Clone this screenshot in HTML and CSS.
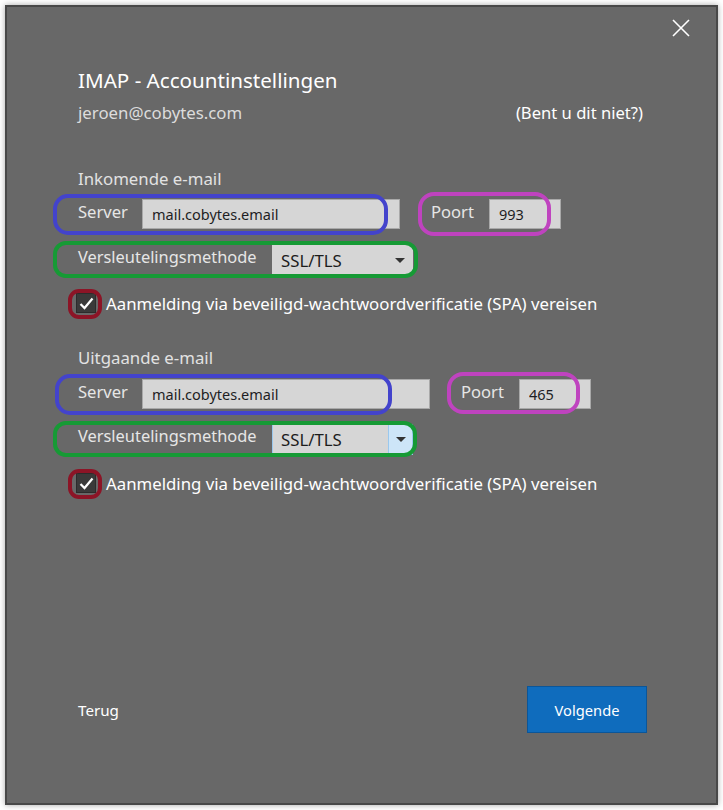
FILE: index.html
```html
<!doctype html>
<html>
<head>
<meta charset="utf-8">
<meta name="viewport" content="width=device-width, initial-scale=1.0">
<link rel="stylesheet" href="styles.css">
<title>IMAP - Accountinstellingen</title>
</head>
<body>
<div class="window">
  <div class="topbar">
    <button class="close" aria-label="Sluiten">
      <svg width="18" height="18" viewBox="0 0 18 18"><path d="M1 1 L17 17 M17 1 L1 17" stroke="#fff" stroke-width="1.6" fill="none"/></svg>
    </button>
  </div>

  <h1>IMAP - Accountinstellingen</h1>
  <div class="account">
    <span class="email">jeroen@cobytes.com</span>
    <a class="not-you" href="#">(Bent u dit niet?)</a>
  </div>

  <h2 class="section first">Inkomende e-mail</h2>
  <div class="row server-row">
    <span class="label server-label">Server</span>
    <input class="text server-in" type="text" value="mail.cobytes.email">
    <span class="label port-label">Poort</span>
    <input class="text port" type="text" value="993">
    <span class="ring blue in-server"></span>
    <span class="ring magenta in-port"></span>
  </div>
  <div class="row select-row">
    <span class="label method-label">Versleutelingsmethode</span>
    <div class="select">
      <span>SSL/TLS</span>
      <span class="arrow"></span>
    </div>
    <span class="ring green in-method"></span>
  </div>
  <div class="check-row">
    <span class="check">
      <svg width="15" height="13" viewBox="0 0 15 13"><path d="M1.5 7 L5.5 11 L13.5 1.5" stroke="#fff" stroke-width="2.2" fill="none"/></svg>
    </span>
    <span class="check-label">Aanmelding via beveiligd-wachtwoordverificatie (SPA) vereisen</span>
    <span class="ring red in-check"></span>
  </div>

  <h2 class="section">Uitgaande e-mail</h2>
  <div class="row server-row out">
    <span class="label server-label">Server</span>
    <input class="text server-out" type="text" value="mail.cobytes.email">
    <span class="label port-label">Poort</span>
    <input class="text port" type="text" value="465">
    <span class="ring blue out-server"></span>
    <span class="ring magenta out-port"></span>
  </div>
  <div class="row select-row out">
    <span class="label method-label">Versleutelingsmethode</span>
    <div class="select focused">
      <span>SSL/TLS</span>
      <span class="arrow"></span>
    </div>
    <span class="ring green out-method"></span>
  </div>
  <div class="check-row out">
    <span class="check">
      <svg width="15" height="13" viewBox="0 0 15 13"><path d="M1.5 7 L5.5 11 L13.5 1.5" stroke="#fff" stroke-width="2.2" fill="none"/></svg>
    </span>
    <span class="check-label">Aanmelding via beveiligd-wachtwoordverificatie (SPA) vereisen</span>
    <span class="ring red out-check"></span>
  </div>

  <div class="footer">
    <a class="back" href="#">Terug</a>
    <button class="next">Volgende</button>
  </div>
</div>
</body>
</html>
```

FILE: styles.css
```css
* {
    box-sizing: border-box;
}
h1,
h2,
p {
    margin: 0;
    padding: 0;
    font-weight: normal;
}
body {
    margin: 0;
    padding: 5px;
    background-color: #fff;
    font-family: "Noto Sans", "Open Sans", sans-serif;
    color: #e4e4e4;
}
.window {
    width: 713px;
    height: 800px;
    background-color: #686868;
    border: 2px solid #484848;
    box-shadow: 0 0 6px rgba(0, 0, 0, 0.35);
    padding: 0 0 70px 71px;
    display: flex;
    flex-direction: column;
}
.topbar {
    display: flex;
    justify-content: flex-end;
    padding: 12px 26px 0 0;
}
.close {
    width: 18px;
    height: 18px;
    padding: 0;
    border: 0;
    background: none;
    display: flex;
}
h1 {
    margin-top: 29px;
    font-size: 20.6px;
    line-height: 28px;
    color: #fff;
}
.account {
    margin-top: 8px;
    margin-right: 73px;
    display: flex;
    justify-content: space-between;
    font-size: 16.8px;
    line-height: 22px;
}
.email {
    color: #dcdcdc;
}
.not-you {
    color: #fff;
    text-decoration: none;
    font-size: 16.6px;
}
.section {
    margin-top: 33px;
    font-size: 16.8px;
    line-height: 22px;
    color: #e2e2e2;
}
.section.first {
    margin-top: 44px;
}
.row {
    position: relative;
    display: flex;
    align-items: center;
    height: 30px;
}
.server-row {
    margin-top: 9px;
}
.server-row.out {
    margin-top: 10px;
}
.select-row {
    margin-top: 16px;
}
.select-row.out {
    margin-top: 15px;
}
.label {
    font-size: 16.6px;
    line-height: 22px;
    color: #e6e6e6;
    padding-bottom: 4px;
}
.server-label {
    width: 64px;
}
.method-label {
    width: 194px;
    font-size: 16.4px;
    padding-bottom: 6px;
}
.port-label {
    width: 58px;
    margin-left: 31px;
}
.text {
    height: 30px;
    border: 1px solid #a9a9a9;
    background-color: #d6d6d6;
    color: #1e1e24;
    font-family: "Noto Sans", "Open Sans", sans-serif;
    font-size: 14.5px;
    padding: 0 0 0 9px;
    outline: none;
}
.server-in {
    width: 258px;
}
.server-out {
    width: 288px;
}
.port {
    width: 72px;
}
.select {
    width: 141px;
    height: 30px;
    background-color: #d6d6d6;
    border: 1px solid #d6d6d6;
    color: #1c1c1c;
    font-size: 16.8px;
    display: flex;
    align-items: center;
    justify-content: space-between;
    padding-left: 8px;
}
.arrow {
    width: 24px;
    height: 100%;
    display: flex;
    align-items: center;
    justify-content: center;
}
.arrow:after {
    content: "";
    border-left: 5px solid transparent;
    border-right: 5px solid transparent;
    border-top: 5px solid #333;
}
.select.focused {
    border-color: #9ac8ee;
    height: 31px;
}
.select.focused .arrow {
    background-color: #cde5f8;
    border-left: 1px solid #9ac8ee;
}
.check-row {
    position: relative;
    margin-top: 17px;
    display: flex;
    align-items: center;
    height: 22px;
}
.check-row.out {
    margin-top: 18px;
}
.check {
    width: 20px;
    height: 20px;
    margin-left: -2px;
    background-color: #3a3a3a;
    border: 1px solid #2c2c2c;
    display: flex;
    align-items: center;
    justify-content: center;
}
.check-label {
    margin-left: 10px;
    font-size: 16.8px;
    color: #fff;
}
.ring {
    position: absolute;
    border: 4px solid;
    pointer-events: none;
}
.blue {
    border-color: #4343cc;
    border-radius: 15px;
}
.magenta {
    border-color: #bf43bf;
    border-radius: 16px;
}
.green {
    border-color: #169a35;
    border-radius: 13px;
}
.red {
    border-color: #8c1426;
    border-radius: 11px;
}
.in-server {
    left: -25px;
    top: -5px;
    width: 335px;
    height: 41px;
}
.in-port {
    left: 340px;
    top: -7px;
    width: 133px;
    height: 44px;
}
.in-method {
    left: -25px;
    top: -4px;
    width: 365px;
    height: 37px;
}
.in-check {
    left: -10px;
    top: -3px;
    width: 34px;
    height: 30px;
}
.out-server {
    left: -23px;
    top: -5px;
    width: 337px;
    height: 41px;
}
.out-port {
    left: 369px;
    top: -7px;
    width: 133px;
    height: 42px;
}
.out-method {
    left: -25px;
    top: -3px;
    width: 364px;
    height: 36px;
}
.out-check {
    left: -10px;
    top: -3px;
    width: 34px;
    height: 30px;
}
.footer {
    margin-top: auto;
    margin-right: 69px;
    display: flex;
    justify-content: space-between;
    align-items: center;
}
.back {
    color: #fff;
    text-decoration: none;
    font-size: 15.2px;
}
.next {
    width: 120px;
    height: 47px;
    background-color: #0f6cbd;
    border: 1px solid #0b5699;
    color: #fff;
    font-family: "Noto Sans", "Open Sans", sans-serif;
    font-size: 14.7px;
}
```
